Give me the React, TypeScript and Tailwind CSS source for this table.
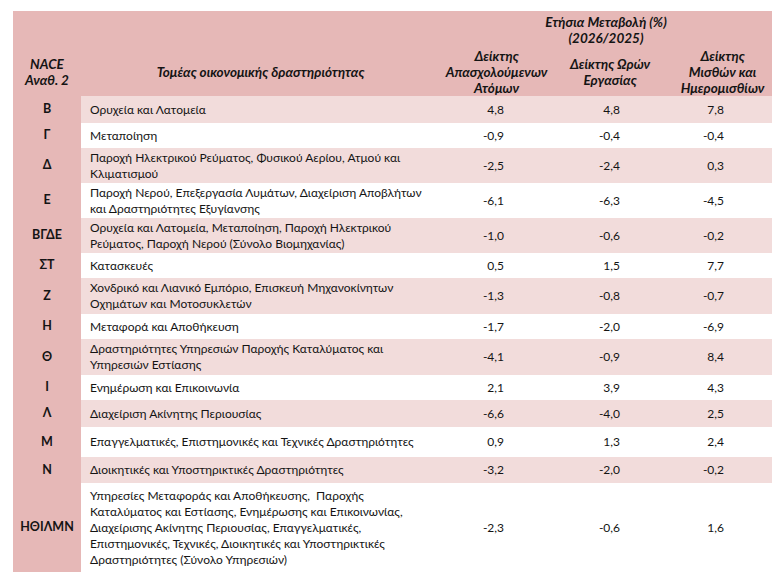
import React from "react";

type Row = {
  code: string;
  lines: string[];
  a: string;
  b: string;
  c: string;
  h: string;
  shade: boolean;
};

const rows: Row[] = [
  { code: "Β", lines: ["Ορυχεία και Λατομεία"], a: "4,8", b: "4,8", c: "7,8", h: "h-[27px]", shade: true },
  { code: "Γ", lines: ["Μεταποίηση"], a: "-0,9", b: "-0,4", c: "-0,4", h: "h-[25px]", shade: false },
  { code: "Δ", lines: ["Παροχή Ηλεκτρικού Ρεύματος, Φυσικού Αερίου, Ατμού και", "Κλιματισμού"], a: "-2,5", b: "-2,4", c: "0,3", h: "h-[35px]", shade: true },
  { code: "Ε", lines: ["Παροχή Νερού, Επεξεργασία Λυμάτων, Διαχείριση Αποβλήτων", "και Δραστηριότητες Εξυγίανσης"], a: "-6,1", b: "-6,3", c: "-4,5", h: "h-[35px]", shade: false },
  { code: "ΒΓΔΕ", lines: ["Ορυχεία και Λατομεία, Μεταποίηση, Παροχή Ηλεκτρικού", "Ρεύματος, Παροχή Νερού (Σύνολο Βιομηχανίας)"], a: "-1,0", b: "-0,6", c: "-0,2", h: "h-[35px]", shade: true },
  { code: "ΣΤ", lines: ["Κατασκευές"], a: "0,5", b: "1,5", c: "7,7", h: "h-[25px]", shade: false },
  { code: "Ζ", lines: ["Χονδρικό και Λιανικό Εμπόριο, Επισκευή Μηχανοκίνητων", "Οχημάτων και Μοτοσυκλετών"], a: "-1,3", b: "-0,8", c: "-0,7", h: "h-[36px]", shade: true },
  { code: "Η", lines: ["Μεταφορά και Αποθήκευση"], a: "-1,7", b: "-2,0", c: "-6,9", h: "h-[25px]", shade: false },
  { code: "Θ", lines: ["Δραστηριότητες Υπηρεσιών Παροχής Καταλύματος και", "Υπηρεσιών Εστίασης"], a: "-4,1", b: "-0,9", c: "8,4", h: "h-[36px]", shade: true },
  { code: "Ι", lines: ["Ενημέρωση και Επικοινωνία"], a: "2,1", b: "3,9", c: "4,3", h: "h-[25px]", shade: false },
  { code: "Λ", lines: ["Διαχείριση Ακίνητης Περιουσίας"], a: "-6,6", b: "-4,0", c: "2,5", h: "h-[27px]", shade: true },
  { code: "Μ", lines: ["Επαγγελματικές, Επιστημονικές και Τεχνικές Δραστηριότητες"], a: "0,9", b: "1,3", c: "2,4", h: "h-[30px]", shade: false },
  { code: "Ν", lines: ["Διοικητικές και Υποστηρικτικές Δραστηριότητες"], a: "-3,2", b: "-2,0", c: "-0,2", h: "h-[26px]", shade: true },
  {
    code: "ΗΘΙΛΜΝ",
    lines: [
      "Υπηρεσίες Μεταφοράς και Αποθήκευσης,\u00a0 Παροχής",
      "Καταλύματος και Εστίασης, Ενημέρωσης και Επικοινωνίας,",
      "Διαχείρισης Ακίνητης Περιουσίας, Επαγγελματικές,",
      "Επιστημονικές, Τεχνικές, Διοικητικές και Υποστηρικτικές",
      "Δραστηριότητες (Σύνολο Υπηρεσιών)",
    ],
    a: "-2,3",
    b: "-0,6",
    c: "1,6",
    h: "h-[89px]",
    shade: false,
  },
];

export default function App() {
  return (
    <div
      className="w-[783px] h-[584px] bg-white pt-[11px] pl-[13px] text-[#141414]"
      style={{ fontFamily: "Lato, 'Noto Sans', sans-serif" }}
    >
      <div className="w-[759px]">
        {/* Header */}
        <div className="flex h-[85px] bg-[#e6b8b7] font-bold italic text-[13.5px] leading-[16px]">
          <div className="w-[68px] flex flex-col justify-end">
            <div className="h-[48px] flex items-center justify-center text-center">
              NACE
              <br />
              Αναθ. 2
            </div>
          </div>
          <div className="w-[359px] flex flex-col justify-end">
            <div className="h-[48px] flex items-center justify-center">
              Τομέας οικονομικής δραστηριότητας
            </div>
          </div>
          <div className="w-[332px] flex flex-col">
            <div className="h-[37px] flex items-center justify-center text-center">
              Ετήσια Μεταβολή (%)
              <br />
              (2026/2025)
            </div>
            <div className="h-[48px] flex">
              <div className="w-[113px] flex items-center justify-center text-center">
                Δείκτης
                <br />
                Απασχολούμενων
                <br />
                Ατόμων
              </div>
              <div className="w-[114px] flex items-center justify-center text-center">
                Δείκτης Ωρών
                <br />
                Εργασίας
              </div>
              <div className="w-[105px] flex items-center justify-center text-center pl-[6px]">
                Δείκτης
                <br />
                Μισθών και
                <br />
                Ημερομισθίων
              </div>
            </div>
          </div>
        </div>
        {/* Body */}
        {rows.map((r) => (
          <div key={r.code} className={`flex ${r.h}`}>
            <div className="w-[68px] bg-[#e6b8b7] flex items-center justify-center font-bold text-[12.5px]">
              {r.code}
            </div>
            <div
              className={`flex-1 flex items-center text-[12px] ${
                r.shade ? "bg-[#f2dcdb]" : "bg-white"
              }`}
            >
              <div className="w-[359px] pl-[9px] leading-[16px] whitespace-nowrap">
                {r.lines.map((l, i) => (
                  <div key={i}>{l}</div>
                ))}
              </div>
              <div className="w-[113px] text-right pr-[49px]">{r.a}</div>
              <div className="w-[114px] text-right pr-[47px]">{r.b}</div>
              <div className="w-[105px] text-right pr-[48px]">{r.c}</div>
            </div>
          </div>
        ))}
      </div>
    </div>
  );
}
